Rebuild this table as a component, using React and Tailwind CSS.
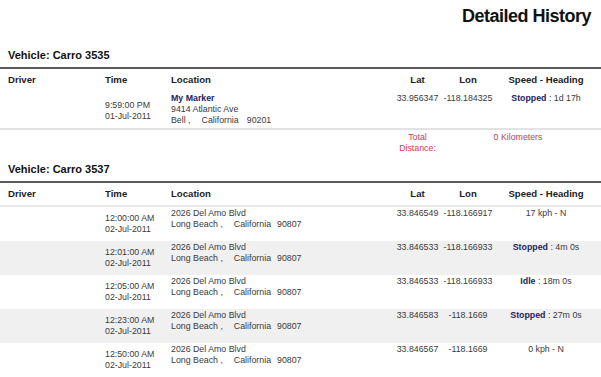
import React from "react";

const GRID = "grid grid-cols-[104px_67px_224px_45px_56px_100px]";

function HeaderRow({ pb }) {
  return (
    <div className={`${GRID} pt-[5px] ${pb} text-[9.6px] leading-[12px] font-bold text-[#222]`}>
      <div className="pl-2">Driver</div>
      <div className="pl-px">Time</div>
      <div>Location</div>
      <div className="text-center">Lat</div>
      <div className="text-center">Lon</div>
      <div className="text-center">Speed - Heading</div>
    </div>
  );
}

function CityLine({ city, state, zip, g1, g2 }) {
  return (
    <div className="whitespace-nowrap">
      <span>{city} ,</span>
      <span className={g1}>{state}</span>
      <span className={g2}>{zip}</span>
    </div>
  );
}

function Speed({ bold, rest, plain }) {
  if (plain) return <span>{plain}</span>;
  return (
    <span>
      <span className="font-bold text-[#23235c]">{bold}</span>
      {rest}
    </span>
  );
}

const rows = [
  { t: "12:00:00 AM", lat: "33.846549", lon: "-118.166917", sp: { plain: "17 kph - N" }, gray: false },
  { t: "12:01:00 AM", lat: "33.846533", lon: "-118.166933", sp: { bold: "Stopped", rest: " : 4m 0s" }, gray: true },
  { t: "12:05:00 AM", lat: "33.846533", lon: "-118.166933", sp: { bold: "Idle", rest: " : 18m 0s" }, gray: false },
  { t: "12:23:00 AM", lat: "33.846583", lon: "-118.1669", sp: { bold: "Stopped", rest: " : 27m 0s" }, gray: true },
  { t: "12:50:00 AM", lat: "33.846567", lon: "-118.1669", sp: { plain: "0 kph - N" }, gray: false },
];

export default function App() {
  return (
    <div className="w-[601px] h-[377px] overflow-hidden bg-white font-['Liberation_Sans',Arial,sans-serif] text-[#3a3a3a]">
      <div className="flex justify-end pt-[6px] pr-[10px]">
        <h1 className="text-[18px] leading-[20px] font-bold tracking-[-0.5px] text-[#111]">Detailed History</h1>
      </div>

      {/* Section 1 */}
      <div className="mt-[23px] pl-2 text-[11px] leading-[13px] font-bold text-[#111]">Vehicle: Carro 3535</div>
      <div className="mt-[5px] h-[2px] bg-[#5a5a5a]" />
      <HeaderRow pb="pb-0" />
      <div className={`${GRID} h-[42px] pt-[7px] text-[8.8px] leading-[11px] items-start`}>
        <div />
        <div className="self-center pl-px">
          <div>9:59:00 PM</div>
          <div>01-Jul-2011</div>
        </div>
        <div>
          <div className="font-bold text-[#23235c]">My Marker</div>
          <div>9414 Atlantic Ave</div>
          <CityLine city="Bell" state="California" zip="90201" g1="ml-[11px]" g2="ml-[8px]" />
        </div>
        <div className="text-center">33.956347</div>
        <div className="text-center">-118.184325</div>
        <div className="text-center">
          <Speed bold="Stopped" rest=" : 1d 17h" />
        </div>
      </div>
      <div className="h-[2px] bg-[#e2e2e2]" />
      <div className={`${GRID} pt-[2px] text-[8.8px] leading-[11px] text-[#c8405a]`}>
        <div />
        <div />
        <div />
        <div className="text-center whitespace-nowrap">
          <div>Total</div>
          <div>Distance:</div>
        </div>
        <div className="col-span-2 text-center">0 Kilometers</div>
      </div>

      {/* Section 2 */}
      <div className="mt-[9px] pl-2 text-[11px] leading-[13px] font-bold text-[#111]">Vehicle: Carro 3537</div>
      <div className="mt-[5px] h-[2px] bg-[#5a5a5a]" />
      <HeaderRow pb="pb-[5px]" />
      <div className="h-[2px] bg-[#e8e8e8]" />
      {rows.map((r, i) => (
        <div
          key={i}
          className={`${GRID} h-[34px] pt-px pb-px text-[8.8px] leading-[11px] items-start ${r.gray ? "bg-[#f0f0f0]" : "bg-white"}`}
        >
          <div />
          <div className="self-center pl-px">
            <div>{r.t}</div>
            <div>02-Jul-2011</div>
          </div>
          <div>
            <div>2026 Del Amo Blvd</div>
            <CityLine city="Long Beach" state="California" zip="90807" g1="ml-[11px]" g2="ml-[6px]" />
          </div>
          <div className="text-center">{r.lat}</div>
          <div className="text-center">{r.lon}</div>
          <div className="text-center whitespace-nowrap">
            <Speed {...r.sp} />
          </div>
        </div>
      ))}
    </div>
  );
}
